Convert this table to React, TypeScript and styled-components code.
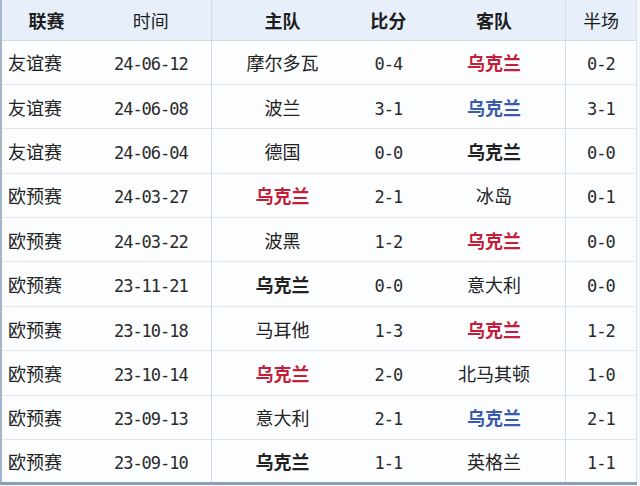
import styled, { createGlobalStyle } from "styled-components";

const GlobalStyle = createGlobalStyle`
    html, body {
        margin: 0;
        padding: 0;
        background: #f4f7fb;
    }
    body {
        font-family: "Noto Sans CJK SC", "Noto Sans", sans-serif;
        color: #222;
    }
`;

const Wrap = styled.div`
    width: 640px;
    height: 486px;
    overflow: hidden;
    background: #f4f7fb;
`;

const Table = styled.table`
    width: 637px;
    border-collapse: collapse;
    table-layout: fixed;
    background: #fcfdfe;
    border-left: 2px solid #a7b6c6;
    border-right: 1px solid #dbe3ec;
    border-bottom: 3px solid #8aa0b6;
`;

const Col = styled.col<{ $w: number }>`
    width: ${(p) => p.$w}px;
`;

const HeadRow = styled.tr`
    height: 40px;
    background: #e7f0fa;
    border-bottom: 1px solid #cfdae6;
`;

const Row = styled.tr`
    height: 44.4px;
    border-bottom: 1px solid #dfe6ee;

    &:last-child {
        border-bottom: none;
    }
`;

const Th = styled.th<{ $weight: number; $line?: boolean }>`
    padding: 0;
    font-size: 18px;
    font-weight: ${(p) => p.$weight};
    text-align: center;
    color: #1e1e1e;
    border-right: ${(p) => (p.$line ? "1px solid #d3dce6" : "none")};
`;

const Td = styled.td<{ $left?: boolean; $line?: boolean }>`
    padding: ${(p) => (p.$left ? "0 0 0 6px" : "0")};
    font-size: 18px;
    text-align: ${(p) => (p.$left ? "left" : "center")};
    white-space: nowrap;
    border-right: ${(p) => (p.$line ? "1px solid #d3dce6" : "none")};
`;

const Num = styled.span`
    font-family: "DejaVu Sans Mono", "Liberation Mono", monospace;
    font-size: 17px;
    letter-spacing: -1px;
    color: #2a2a2a;
`;

const Team = styled.span<{ $tone?: "red" | "blue" | "bold" }>`
    color: ${(p) =>
        p.$tone === "red" ? "#c41f3a" : p.$tone === "blue" ? "#3a5aad" : "#222"};
    font-weight: ${(p) => (p.$tone ? 700 : 400)};
`;

type Tone = "red" | "blue" | "bold" | undefined;

type Match = {
    league: string;
    date: string;
    home: string;
    homeTone?: Tone;
    score: string;
    away: string;
    awayTone?: Tone;
    half: string;
};

const UA = "乌克兰";

const matches: Match[] = [
    { league: "友谊赛", date: "24-06-12", home: "摩尔多瓦", score: "0-4", away: UA, awayTone: "red", half: "0-2" },
    { league: "友谊赛", date: "24-06-08", home: "波兰", score: "3-1", away: UA, awayTone: "blue", half: "3-1" },
    { league: "友谊赛", date: "24-06-04", home: "德国", score: "0-0", away: UA, awayTone: "bold", half: "0-0" },
    { league: "欧预赛", date: "24-03-27", home: UA, homeTone: "red", score: "2-1", away: "冰岛", half: "0-1" },
    { league: "欧预赛", date: "24-03-22", home: "波黑", score: "1-2", away: UA, awayTone: "red", half: "0-0" },
    { league: "欧预赛", date: "23-11-21", home: UA, homeTone: "bold", score: "0-0", away: "意大利", half: "0-0" },
    { league: "欧预赛", date: "23-10-18", home: "马耳他", score: "1-3", away: UA, awayTone: "red", half: "1-2" },
    { league: "欧预赛", date: "23-10-14", home: UA, homeTone: "red", score: "2-0", away: "北马其顿", half: "1-0" },
    { league: "欧预赛", date: "23-09-13", home: "意大利", score: "2-1", away: UA, awayTone: "blue", half: "2-1" },
    { league: "欧预赛", date: "23-09-10", home: UA, homeTone: "bold", score: "1-1", away: "英格兰", half: "1-1" },
];

export default function App() {
    return (
        <>
            <GlobalStyle />
            <Wrap>
                <Table>
                    <colgroup>
                        <Col $w={90} />
                        <Col $w={120} />
                        <Col $w={142} />
                        <Col $w={70} />
                        <Col $w={142} />
                        <Col $w={71} />
                    </colgroup>
                    <thead>
                        <HeadRow>
                            <Th $weight={600}>联赛</Th>
                            <Th $weight={400} $line>时间</Th>
                            <Th $weight={700}>主队</Th>
                            <Th $weight={700}>比分</Th>
                            <Th $weight={600} $line>客队</Th>
                            <Th $weight={400}>半场</Th>
                        </HeadRow>
                    </thead>
                    <tbody>
                        {matches.map((m) => (
                            <Row key={m.date}>
                                <Td $left>{m.league}</Td>
                                <Td $line><Num>{m.date}</Num></Td>
                                <Td><Team $tone={m.homeTone}>{m.home}</Team></Td>
                                <Td><Num>{m.score}</Num></Td>
                                <Td $line><Team $tone={m.awayTone}>{m.away}</Team></Td>
                                <Td><Num>{m.half}</Num></Td>
                            </Row>
                        ))}
                    </tbody>
                </Table>
            </Wrap>
        </>
    );
}
